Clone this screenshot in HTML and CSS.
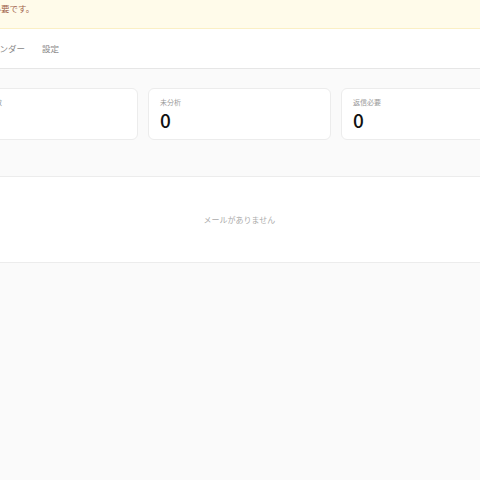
FILE: index.html
```html
<!DOCTYPE html>
<html lang="ja">
<head>
<meta charset="utf-8">
<title>メール</title>
<link rel="stylesheet" href="styles.css">
</head>
<body>
<div class="page">
  <div class="banner"><span class="banner-text">メール連携の設定が必要です。</span></div>
  <nav class="nav">
    <a class="nav-item">ダッシュボード</a>
    <a class="nav-item">カレンダー</a>
    <a class="nav-item">設定</a>
  </nav>
  <main class="main">
    <div class="stats">
      <div class="card"><div class="card-label">総メール数</div><div class="card-value">0</div></div>
      <div class="card"><div class="card-label">未分析</div><div class="card-value">0</div></div>
      <div class="card"><div class="card-label">返信必要</div><div class="card-value">0</div></div>
    </div>
    <section class="panel">
      <p class="empty">メールがありません</p>
    </section>
  </main>
</div>
</body>
</html>
```
FILE: styles.css
```css
html, body {
  margin: 0;
  padding: 0;
  background: #fafafa;
  overflow: hidden;
  height: 480px;
  font-family: "Noto Sans CJK JP", "Noto Sans", sans-serif;
}
.page {
  width: 680px;
  margin-left: -100px;
}
.banner {
  background: #fffbea;
  border-bottom: 1px solid #fbefc4;
  height: 28px;
  padding-left: 16px;
  display: flex;
  align-items: flex-start;
}
.banner-text {
  font-size: 8.5px;
  line-height: 16px;
  color: #a06048;
}
.nav {
  background: #fff;
  border-bottom: 1px solid #e6e6e6;
  height: 39px;
  display: flex;
  align-items: center;
  gap: 17px;
  padding-left: 6px;
}
.nav-item {
  font-size: 8.5px;
  line-height: 12px;
  color: #888;
  margin-top: -1px;
}
.main {
  padding: 19px 56px 0 55px;
}
.stats {
  display: grid;
  grid-template-columns: repeat(3, 183px);
  gap: 10px;
}
.card {
  background: #fff;
  border: 1px solid #ececec;
  border-radius: 6px;
  height: 52px;
  box-sizing: border-box;
  padding: 8px 11px 0;
}
.card-label {
  font-size: 7px;
  line-height: 10px;
  color: #9a9a9a;
}
.card-value {
  font-size: 19px;
  line-height: 20px;
  font-weight: 500;
  color: #111;
  margin-top: 3px;
}
.panel {
  margin-top: 36px;
  background: #fff;
  border-top: 1px solid #ececec;
  border-bottom: 1px solid #ececec;
  height: 87px;
  box-sizing: border-box;
  display: flex;
  align-items: center;
  justify-content: center;
}
.empty {
  margin: 0;
  font-size: 8px;
  line-height: 12px;
  color: #ababab;
}
```
